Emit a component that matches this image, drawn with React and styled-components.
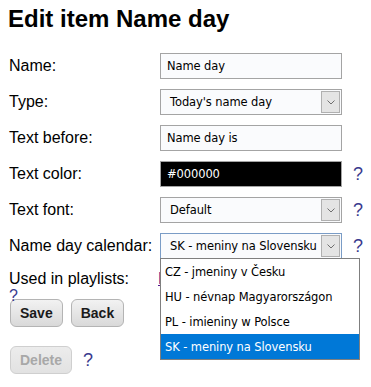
import React from "react";
import styled, { createGlobalStyle } from "styled-components";

const GlobalStyle = createGlobalStyle`
  html, body {
    margin: 0;
    padding: 0;
    background: #ffffff;
  }
  body {
    font-family: "Liberation Sans", Arial, sans-serif;
    color: #000;
  }
`;

const Page = styled.div`
  position: relative;
  width: 371px;
  height: 387px;
  padding: 5px 8px 0 8px;
  box-sizing: border-box;
  overflow: hidden;
`;

const Title = styled.h2`
  margin: 0 0 20px 0;
  font-size: 24px;
  font-weight: 700;
  line-height: 28px;
`;

const Form = styled.div`
  position: relative;
  display: grid;
  grid-template-columns: 152px 182px auto;
  grid-auto-rows: 26px;
  row-gap: 10px;
  align-items: center;
`;

const Label = styled.div`
  font-size: 16px;
  padding-left: 1px;
  white-space: nowrap;
`;

const ctrlFont = `"DejaVu Sans", Tahoma, Verdana, sans-serif`;

const TextInput = styled.input`
  box-sizing: border-box;
  width: 182px;
  height: 26px;
  margin: 0;
  padding: 0 6px;
  border: 1px solid #a4a4a4;
  background: ${({ $bg }) => $bg || "#fafbfd"};
  color: ${({ $fg }) => $fg || "#000"};
  font-family: ${ctrlFont};
  font-size: 11.5px;
  letter-spacing: -0.1px;
  outline: none;
`;

const Select = styled.div`
  box-sizing: border-box;
  width: 182px;
  height: 26px;
  display: flex;
  align-items: stretch;
  border: 1px solid ${({ $focus }) => ($focus ? "#7a9cc6" : "#a4a4a4")};
  background: #fafbfd;
  font-family: ${ctrlFont};
  font-size: 11.5px;
  letter-spacing: -0.1px;
`;

const SelectText = styled.div`
  flex: 1;
  display: flex;
  align-items: center;
  padding-left: 9px;
  white-space: nowrap;
  overflow: hidden;
`;

const ArrowBox = styled.div`
  width: 17px;
  margin: 1px;
  display: flex;
  align-items: center;
  justify-content: center;
  background: #e4e4e4;
  border: 1px solid #b0b0b0;
`;

const Help = styled.span`
  padding-left: ${({ $pad = 11 }) => $pad}px;
  font-size: 18px;
  color: #3a3a8e;
  cursor: pointer;
`;

const Empty = styled.div``;

const PlaylistLabel = styled.div`
  font-size: 16px;
  padding-left: 1px;
  align-self: start;
  line-height: 18px;
  margin-top: 1px;
`;

const HelpBlock = styled.div`
  font-size: 16px;
  line-height: 15px;
  color: #3a3a8e;
`;

const PlaylistLink = styled.a`
  align-self: start;
  margin-top: 1px;
  margin-left: -2px;
  font-size: 16px;
  line-height: 18px;
  color: #551a8b;
  text-decoration: underline;
`;

const Dropdown = styled.div`
  position: absolute;
  left: 152px;
  top: 205px;
  width: 200px;
  box-sizing: border-box;
  border: 1px solid #7f7f7f;
  background: #fff;
  font-family: ${ctrlFont};
  font-size: 11.5px;
  letter-spacing: -0.1px;
  z-index: 2;
`;

const Option = styled.div`
  height: 25px;
  display: flex;
  align-items: center;
  padding-left: 4px;
  white-space: nowrap;
  background: ${({ $active }) => ($active ? "#0078d7" : "#fff")};
  color: ${({ $active }) => ($active ? "#fff" : "#000")};
`;

const ButtonRow = styled.div`
  display: flex;
  align-items: center;
  gap: 8px;
  margin-top: ${({ $mt }) => $mt}px;
  padding-left: 2px;
`;

const Button = styled.button`
  box-sizing: border-box;
  height: 28px;
  padding: 0 9px;
  border: 1px solid ${({ disabled }) => (disabled ? "#cfcfcf" : "#b4b4b4")};
  border-radius: 6px;
  background: ${({ disabled }) =>
    disabled
      ? "linear-gradient(#ececec, #e2e2e2)"
      : "linear-gradient(#f2f2f2, #d9d9d9)"};
  color: ${({ disabled }) => (disabled ? "#a8a8a8" : "#1a1a1a")};
  font-family: "Liberation Sans", Arial, sans-serif;
  font-size: 14px;
  font-weight: 700;
`;

const Chevron = () => (
  <svg width="8" height="5" viewBox="0 0 8 5">
    <path d="M0.5 0.5 L4 4 L7.5 0.5" fill="none" stroke="#6f6f6f" strokeWidth="1" />
  </svg>
);

const SelectField = ({ value, focus }) => (
  <Select $focus={focus}>
    <SelectText>{value}</SelectText>
    <ArrowBox>
      <Chevron />
    </ArrowBox>
  </Select>
);

const calendars = [
  "CZ - jmeniny v Česku",
  "HU - névnap Magyarországon",
  "PL - imieniny w Polsce",
  "SK - meniny na Slovensku",
];

export default function App() {
  return (
    <Page>
      <GlobalStyle />
      <Title>Edit item Name day</Title>
      <Form>
        <Label>Name:</Label>
        <TextInput defaultValue="Name day" />
        <Empty />

        <Label>Type:</Label>
        <SelectField value="Today's name day" />
        <Empty />

        <Label>Text before:</Label>
        <TextInput defaultValue="Name day is" />
        <Empty />

        <Label>Text color:</Label>
        <TextInput defaultValue="#000000" $bg="#000" $fg="#fff" />
        <Help>?</Help>

        <Label>Text font:</Label>
        <SelectField value="Default" />
        <Help>?</Help>

        <Label>Name day calendar:</Label>
        <SelectField value="SK - meniny na Slovensku" focus />
        <Help>?</Help>

        <PlaylistLabel>
          Used in playlists:
          <HelpBlock>?</HelpBlock>
        </PlaylistLabel>
        <PlaylistLink href="#">Name day</PlaylistLink>
        <Empty />

        <Dropdown>
          {calendars.map((c, i) => (
            <Option key={c} $active={i === 3}>
              {c}
            </Option>
          ))}
        </Dropdown>
      </Form>
      <ButtonRow $mt={4}>
        <Button>Save</Button>
        <Button>Back</Button>
      </ButtonRow>
      <ButtonRow $mt={19}>
        <Button disabled>Delete</Button>
        <Help $pad={3}>?</Help>
      </ButtonRow>
    </Page>
  );
}
